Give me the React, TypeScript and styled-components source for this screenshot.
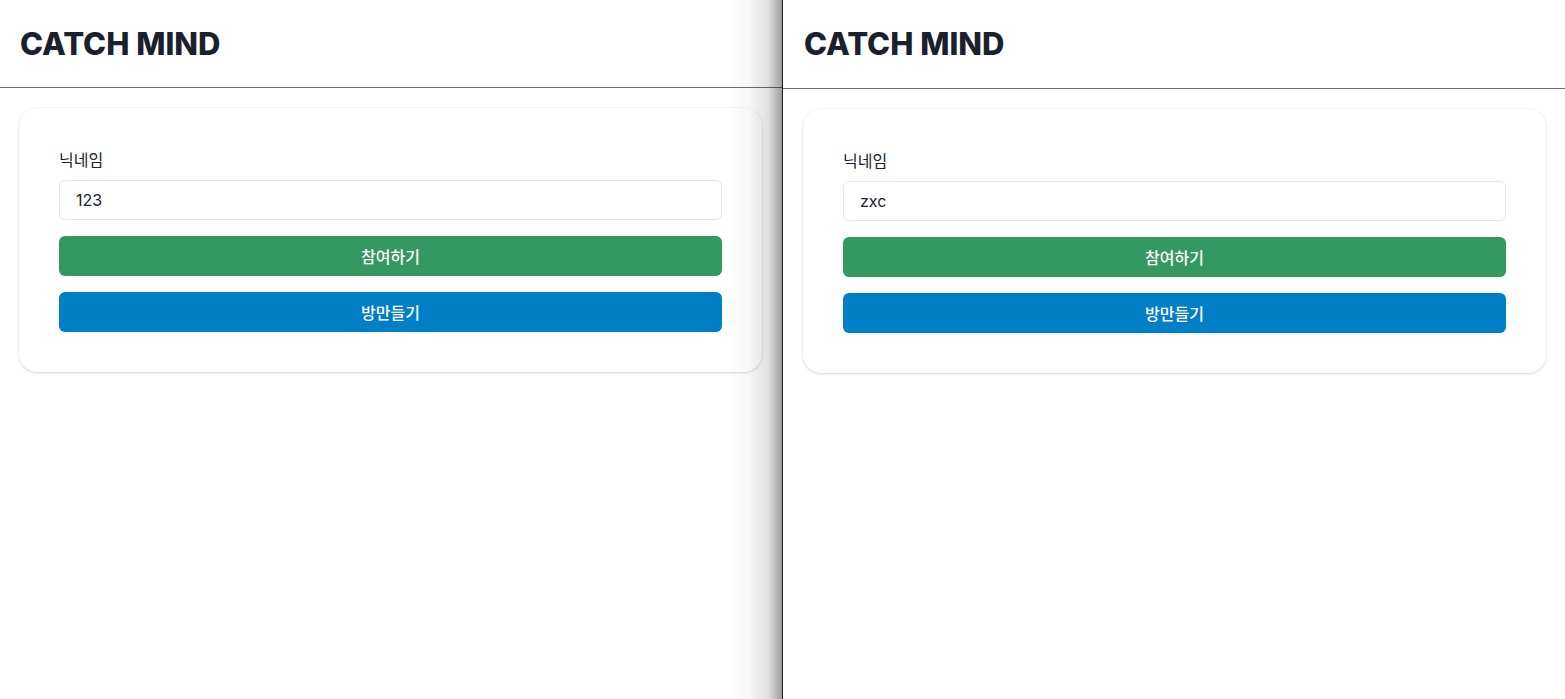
import React from "react";
import styled, { createGlobalStyle } from "styled-components";

const Global = createGlobalStyle`
  html, body { margin: 0; padding: 0; background: #ffffff; }
  body { font-family: Inter, "Noto Sans CJK KR", sans-serif; color: #1a202c; }
  * { box-sizing: border-box; }
`;

const Screen = styled.div`
  display: flex;
  width: 1565px;
  height: 699px;
  overflow: hidden;
  background: #ffffff;
`;

const Pane = styled.div<{ $w: number; $shade?: boolean }>`
  position: relative;
  width: ${(p) => p.$w}px;
  flex: none;
  height: 100%;
  display: flex;
  flex-direction: column;
  background: #ffffff;
  ${(p) =>
    p.$shade
      ? `&::after {
    content: "";
    position: absolute;
    top: 0;
    right: 0;
    width: 56px;
    height: 100%;
    pointer-events: none;
    background: linear-gradient(to right, rgba(0,0,0,0) 0%, rgba(0,0,0,0.03) 40%, rgba(0,0,0,0.12) 75%, rgba(0,0,0,0.38) 100%);
  }`
      : ""}
`;

const Divider = styled.div`
  width: 1px;
  flex: none;
  height: 100%;
  background: #1e1e1e;
`;

const Header = styled.header<{ $h: number; $pl: number }>`
  height: ${(p) => p.$h}px;
  display: flex;
  align-items: center;
  padding-left: ${(p) => p.$pl}px;
  border-bottom: 1px solid #6e6e6e;
  flex: none;
`;

const Title = styled.h1`
  margin: 0;
  font-family: Inter, sans-serif;
  font-size: 31px;
  font-weight: 800;
  letter-spacing: 0;
  color: #1a202c;
  line-height: 36px;
`;

const Card = styled.div<{ $ml: number }>`
  margin: 20px 0 0 ${(p) => p.$ml}px;
  width: 743px;
  padding: 40px;
  border-radius: 18px;
  background: #ffffff;
  box-shadow: 0 0 0 1px rgba(0, 0, 0, 0.025), 0 1px 3px rgba(0, 0, 0, 0.1), 0 1px 2px rgba(0, 0, 0, 0.05);
  display: flex;
  flex-direction: column;
`;

const Label = styled.label`
  font-size: 16px;
  line-height: 24px;
  color: #1a202c;
  margin-bottom: 8px;
`;

const Input = styled.input`
  height: 40px;
  width: 100%;
  border: 1px solid #e2e8f0;
  border-radius: 6px;
  padding: 0 16px;
  font-family: Inter, "Noto Sans CJK KR", sans-serif;
  font-size: 16px;
  color: #1a202c;
  outline: none;
  background: #ffffff;
`;

const Button = styled.button<{ $bg: string }>`
  margin-top: 16px;
  height: 40px;
  width: 100%;
  border: none;
  border-radius: 6px;
  background: ${(p) => p.$bg};
  color: #ffffff;
  font-family: Inter, "Noto Sans CJK KR", sans-serif;
  font-size: 16px;
  font-weight: 500;
  cursor: pointer;
`;

type WindowProps = { value: string; headerH: number; titlePl: number; cardMl: number };

function Lobby({ value, headerH, titlePl, cardMl }: WindowProps) {
  return (
    <>
      <Header $h={headerH} $pl={titlePl}>
        <Title>CATCH MIND</Title>
      </Header>
      <Card $ml={cardMl}>
        <Label>닉네임</Label>
        <Input defaultValue={value} />
        <Button $bg="#339960">참여하기</Button>
        <Button $bg="#007ec6">방만들기</Button>
      </Card>
    </>
  );
}

export default function App() {
  return (
    <>
      <Global />
      <Screen>
        <Pane $w={782} $shade>
          <Lobby value="123" headerH={88} titlePl={20} cardMl={19} />
        </Pane>
        <Divider />
        <Pane $w={782}>
          <Lobby value="zxc" headerH={89} titlePl={21} cardMl={20} />
        </Pane>
      </Screen>
    </>
  );
}
